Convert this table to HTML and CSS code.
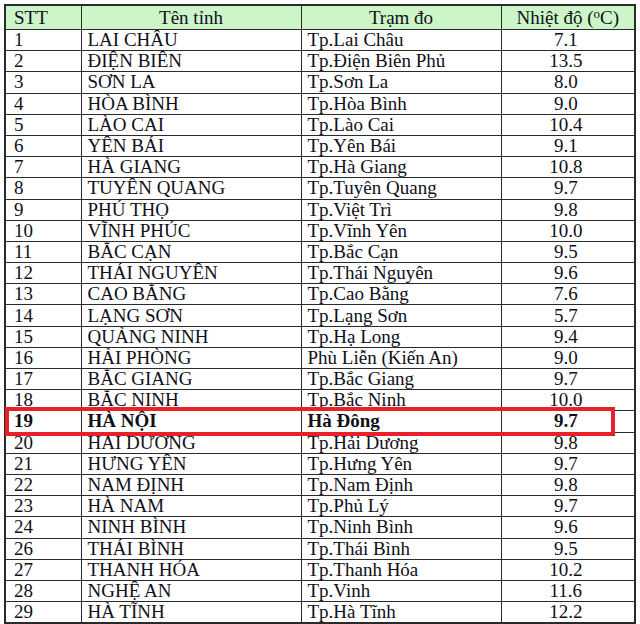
FILE: index.html
```html
<!DOCTYPE html>
<html lang="vi">
<head>
<meta charset="utf-8">
<title>Nhiệt độ</title>
<link rel="stylesheet" href="styles.css">
</head>
<body>
<div class="wrap">
<table class="temps">
<colgroup><col class="c1"><col class="c2"><col class="c3"><col class="c4"></colgroup>
<thead>
<tr><th class="stt">STT</th><th>Tên tỉnh</th><th>Trạm đo</th><th>Nhiệt độ (<sup>o</sup>C)</th></tr>
</thead>
<tbody>
<tr><td>1</td><td>LAI CHÂU</td><td>Tp.Lai Châu</td><td class="num">7.1</td></tr>
<tr><td>2</td><td>ĐIỆN BIÊN</td><td>Tp.Điện Biên Phủ</td><td class="num">13.5</td></tr>
<tr><td>3</td><td>SƠN LA</td><td>Tp.Sơn La</td><td class="num">8.0</td></tr>
<tr><td>4</td><td>HÒA BÌNH</td><td>Tp.Hòa Bình</td><td class="num">9.0</td></tr>
<tr><td>5</td><td>LÀO CAI</td><td>Tp.Lào Cai</td><td class="num">10.4</td></tr>
<tr><td>6</td><td>YÊN BÁI</td><td>Tp.Yên Bái</td><td class="num">9.1</td></tr>
<tr><td>7</td><td>HÀ GIANG</td><td>Tp.Hà Giang</td><td class="num">10.8</td></tr>
<tr><td>8</td><td>TUYÊN QUANG</td><td>Tp.Tuyên Quang</td><td class="num">9.7</td></tr>
<tr><td>9</td><td>PHÚ THỌ</td><td>Tp.Việt Trì</td><td class="num">9.8</td></tr>
<tr><td>10</td><td>VĨNH PHÚC</td><td>Tp.Vĩnh Yên</td><td class="num">10.0</td></tr>
<tr><td>11</td><td>BẮC CẠN</td><td>Tp.Bắc Cạn</td><td class="num">9.5</td></tr>
<tr><td>12</td><td>THÁI NGUYÊN</td><td>Tp.Thái Nguyên</td><td class="num">9.6</td></tr>
<tr><td>13</td><td>CAO BẰNG</td><td>Tp.Cao Bằng</td><td class="num">7.6</td></tr>
<tr><td>14</td><td>LẠNG SƠN</td><td>Tp.Lạng Sơn</td><td class="num">5.7</td></tr>
<tr><td>15</td><td>QUẢNG NINH</td><td>Tp.Hạ Long</td><td class="num">9.4</td></tr>
<tr><td>16</td><td>HẢI PHÒNG</td><td>Phù Liễn (Kiến An)</td><td class="num">9.0</td></tr>
<tr><td>17</td><td>BẮC GIANG</td><td>Tp.Bắc Giang</td><td class="num">9.7</td></tr>
<tr><td>18</td><td>BẮC NINH</td><td>Tp.Bắc Ninh</td><td class="num">10.0</td></tr>
<tr class="hl"><td>19</td><td>HÀ NỘI</td><td>Hà Đông</td><td class="num">9.7</td></tr>
<tr><td>20</td><td>HẢI DƯƠNG</td><td>Tp.Hải Dương</td><td class="num">9.8</td></tr>
<tr><td>21</td><td>HƯNG YÊN</td><td>Tp.Hưng Yên</td><td class="num">9.7</td></tr>
<tr><td>22</td><td>NAM ĐỊNH</td><td>Tp.Nam Định</td><td class="num">9.8</td></tr>
<tr><td>23</td><td>HÀ NAM</td><td>Tp.Phủ Lý</td><td class="num">9.7</td></tr>
<tr><td>24</td><td>NINH BÌNH</td><td>Tp.Ninh Bình</td><td class="num">9.6</td></tr>
<tr><td>26</td><td>THÁI BÌNH</td><td>Tp.Thái Bình</td><td class="num">9.5</td></tr>
<tr><td>27</td><td>THANH HÓA</td><td>Tp.Thanh Hóa</td><td class="num">10.2</td></tr>
<tr><td>28</td><td>NGHỆ AN</td><td>Tp.Vinh</td><td class="num">11.6</td></tr>
<tr><td>29</td><td>HÀ TĨNH</td><td>Tp.Hà Tĩnh</td><td class="num">12.2</td></tr>
</tbody>
</table>
<div class="mark"></div>
</div>
</body>
</html>
```
FILE: styles.css
```css
html, body {
  margin: 0;
  padding: 0;
  background: #ffffff;
}
body {
  font-family: "Liberation Serif", "Times New Roman", serif;
  color: #101018;
}
.wrap {
  position: relative;
  padding: 4px 0 0 4px;
}
.temps {
  border-collapse: collapse;
  table-layout: fixed;
  width: 630px;
  font-size: 19px;
  line-height: 20px;
  border: 2px solid #2a2a2a;
}
.c1 { width: 76px; }
.c2 { width: 220px; }
.c3 { width: 200px; }
.c4 { width: 134px; }
.temps th,
.temps td {
  border: 1px solid #2a2a2a;
  padding: 0 6px;
  white-space: nowrap;
  overflow: hidden;
}
.temps th {
  background: #ccf5c8;
  font-weight: normal;
  text-align: center;
  height: 22px;
  padding-top: 1px;
}
.temps th.stt {
  text-align: left;
  padding-left: 8px;
}
.temps td {
  height: 20.2px;
}
.temps td:first-child {
  padding-left: 8px;
}
.temps td.num {
  text-align: center;
  padding-right: 10px;
}
.temps sup {
  font-size: 13px;
  line-height: 0;
  vertical-align: 6px;
}
.hl td {
  font-weight: bold;
}
.mark {
  position: absolute;
  left: 5px;
  top: 407px;
  width: 602px;
  height: 21px;
  border: 4px solid #e8202a;
  pointer-events: none;
}
```
